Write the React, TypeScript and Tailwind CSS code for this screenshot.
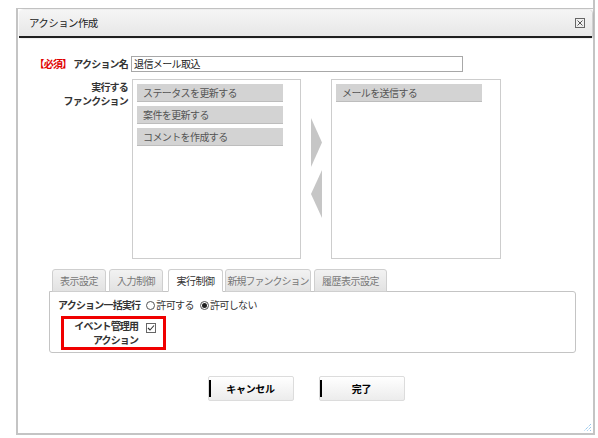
import React from "react";

const font = "font-['Noto_Sans_CJK_JP','Noto_Sans',sans-serif]";

function ListItem({ label }: { label: string }) {
  return (
    <div className="w-[146px] h-[18px] bg-[#d3d3d3] border-b border-[#bdbdbd] flex items-center pl-[6px] text-[10px] text-[#555] tracking-[-0.6px] leading-none whitespace-nowrap">
      {label}
    </div>
  );
}

function Tab({ label, active, w, t }: { label: string; active?: boolean; w: string; t?: string }) {
  return (
    <div
      className={
        "h-[23px] flex items-center justify-center rounded-t-[3px] border border-[#cfcfcf] text-[10px] leading-none whitespace-nowrap " +
        w +
        " " +
        (t ?? "tracking-[-0.5px]") +
        (active
          ? " bg-white border-b-white text-[#333] relative z-10"
          : " bg-gradient-to-b from-[#f2f2f2] to-[#e2e2e2] text-[#777]")
      }
    >
      {label}
    </div>
  );
}

function Btn({ label }: { label: string }) {
  return (
    <div className="relative w-[86px] h-[25px] rounded-[2px] border border-[#dcdcdc] bg-gradient-to-b from-white to-[#ececec] flex items-center justify-center text-[10px] font-bold text-black leading-none tracking-[-0.3px]">
      <span className="absolute left-0 top-[3px] bottom-[3px] w-[2px] bg-black" />
      {label}
    </div>
  );
}

export default function App() {
  return (
    <div className={"relative w-[598px] h-[438px] bg-white overflow-hidden " + font}>
      <span className="absolute left-[593px] top-0 h-[9px] w-[2px] bg-[#c4c4c4]" />
      <div className="ml-[16px] mt-[8px] w-[579px] h-[427px] border-t border-l-2 border-r-2 border-b-2 border-[#c4c4c4] flex flex-col relative">
        {/* header */}
        <div className="mx-[1px] mt-[1px] h-[28px] rounded-t-[4px] bg-gradient-to-b from-[#f5f5f5] to-[#e7e7e7] border-b-2 border-[#1e1e1e] shadow-[1px_0_2px_rgba(0,0,0,0.25)] flex items-center justify-between pl-[10px] pr-[7px]">
          <span className="text-[10.5px] text-[#222] tracking-[-0.6px] leading-none">アクション作成</span>
          <span className="w-[10px] h-[10px] border border-[#666] flex items-center justify-center">
            <svg width="8" height="8" viewBox="0 0 8 8">
              <path d="M1.5 1.5 L6.5 6.5 M6.5 1.5 L1.5 6.5" stroke="#555" strokeWidth="1" />
            </svg>
          </span>
        </div>

        {/* name row */}
        <div className="mt-[18px] flex items-center">
          <div className="w-[110px] text-right text-[10px] font-bold tracking-[-0.8px] text-[#333] leading-none whitespace-nowrap">
            <span className="text-[#e00000] mr-[2px]">【必須】</span>アクション名
          </div>
          <div className="ml-[3px] w-[332px] h-[16px] border border-[#a8a8a8] flex items-center pl-[2px] text-[10px] text-[#222] tracking-[-0.6px] leading-none">
            退信メール取込
          </div>
        </div>

        {/* function row */}
        <div className="mt-[7px] flex">
          <div className="w-[110px] text-right text-[10px] font-bold text-[#333] leading-[14px] tracking-[-0.8px] pt-[1px] whitespace-nowrap">
            実行する
            <br />
            ファンクション
          </div>
          <div className="ml-[4px] w-[169px] h-[180px] border border-[#cdcdcd] p-[4px] flex flex-col gap-[4px]">
            <ListItem label="ステータスを更新する" />
            <ListItem label="案件を更新する" />
            <ListItem label="コメントを作成する" />
          </div>
          <div className="w-[30px] flex flex-col pt-[39px] pl-[10px] gap-[3px]">
            <svg width="11" height="49" viewBox="0 0 11 49">
              <polygon points="0,0 11,24.5 0,49" fill="#c6c6c6" />
            </svg>
            <svg width="11" height="48" viewBox="0 0 11 48">
              <polygon points="11,0 0,24 11,48" fill="#c6c6c6" />
            </svg>
          </div>
          <div className="w-[170px] h-[180px] border border-[#cdcdcd] p-[4px] flex flex-col gap-[4px]">
            <ListItem label="メールを送信する" />
          </div>
        </div>

        {/* tabs */}
        <div className="mt-[10px] ml-[31px] w-[527px]">
          <div className="flex pl-[3px] -mb-px">
            <Tab label="表示設定" w="w-[54px]" />
            <div className="w-[3px]" />
            <Tab label="入力制御" w="w-[54px]" />
            <div className="w-[5px]" />
            <Tab label="実行制御" w="w-[55px]" active />
            <div className="w-[2px]" />
            <Tab label="新規ファンクション" w="w-[86px]" t="tracking-[-1px]" />
            <div className="w-[3px]" />
            <Tab label="履歴表示設定" w="w-[73px]" />
          </div>
          <div className="h-[62px] border border-[#c4c4c4] rounded-[3px] rounded-tl-none pl-[8px] pt-[6px]">
            <div className="flex items-center h-[14px] text-[10px] leading-none whitespace-nowrap">
              <span className="font-bold text-[#333] tracking-[-0.8px]">アクション一括実行</span>
              <span className="ml-[6px] w-[9px] h-[9px] rounded-full border border-[#555]" />
              <span className="ml-[1px] text-[#333] tracking-[-0.6px]">許可する</span>
              <span className="ml-[6px] w-[9px] h-[9px] rounded-full border border-[#555] flex items-center justify-center">
                <span className="w-[5px] h-[5px] rounded-full bg-[#222]" />
              </span>
              <span className="ml-[1px] text-[#333] tracking-[-0.6px]">許可しない</span>
            </div>
            <div className="mt-[4px] ml-[3px] w-[105px] h-[34px] border-[3px] border-[#f00000] flex items-center">
              <div className="w-[74px] text-right text-[10px] font-bold text-[#333] leading-[14px] tracking-[-0.9px] whitespace-nowrap">
                <div>イベント管理用</div>
                <div>アクション</div>
              </div>
              <span className="ml-[8px] -mt-[10px] w-[10px] h-[10px] border border-[#666] flex items-center justify-center">
                <svg width="8" height="8" viewBox="0 0 8 8">
                  <path d="M1 4 L3 6 L7 1.5" stroke="#333" strokeWidth="1.1" fill="none" />
                </svg>
              </span>
            </div>
          </div>
        </div>

        {/* buttons */}
        <div className="mt-[23px] flex justify-center gap-[25px] pl-[1px]">
          <Btn label="キャンセル" />
          <Btn label="完了" />
        </div>

        {/* resize grip */}
        <svg className="absolute right-[1px] bottom-[1px]" width="9" height="9" viewBox="0 0 9 9">
          <path d="M8 1 L1 8 M8 4 L4 8 M8 7 L7 8" stroke="#6fb3e6" strokeWidth="1" strokeDasharray="1 1" />
        </svg>
      </div>
    </div>
  );
}
